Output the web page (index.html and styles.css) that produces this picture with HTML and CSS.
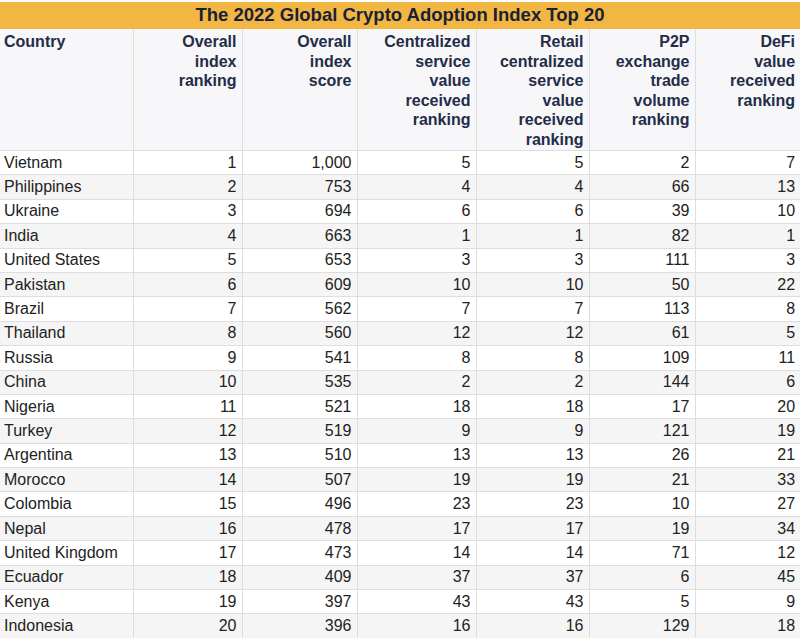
FILE: index.html
```html
<!DOCTYPE html>
<html>
<head>
<meta charset="utf-8">
<link rel="stylesheet" href="styles.css">
</head>
<body>
<div class="top-strip"></div>
<table class="tbl">
<colgroup>
<col class="c1"><col class="c2"><col class="c3"><col class="c4"><col class="c5"><col class="c6"><col class="c7">
</colgroup>
<thead>
<tr class="title-row"><th colspan="7" class="title">The 2022 Global Crypto Adoption Index Top 20</th></tr>
<tr class="head-row">
<th class="left">Country</th>
<th>Overall<br>index<br>ranking</th>
<th>Overall<br>index<br>score</th>
<th>Centralized<br>service<br>value<br>received<br>ranking</th>
<th>Retail<br>centralized<br>service<br>value<br>received<br>ranking</th>
<th>P2P<br>exchange<br>trade<br>volume<br>ranking</th>
<th>DeFi<br>value<br>received<br>ranking</th>
</tr>
</thead>
<tbody>
<tr><td class="left">Vietnam</td><td>1</td><td>1,000</td><td>5</td><td>5</td><td>2</td><td>7</td></tr>
<tr><td class="left">Philippines</td><td>2</td><td>753</td><td>4</td><td>4</td><td>66</td><td>13</td></tr>
<tr><td class="left">Ukraine</td><td>3</td><td>694</td><td>6</td><td>6</td><td>39</td><td>10</td></tr>
<tr><td class="left">India</td><td>4</td><td>663</td><td>1</td><td>1</td><td>82</td><td>1</td></tr>
<tr><td class="left">United States</td><td>5</td><td>653</td><td>3</td><td>3</td><td>111</td><td>3</td></tr>
<tr><td class="left">Pakistan</td><td>6</td><td>609</td><td>10</td><td>10</td><td>50</td><td>22</td></tr>
<tr><td class="left">Brazil</td><td>7</td><td>562</td><td>7</td><td>7</td><td>113</td><td>8</td></tr>
<tr><td class="left">Thailand</td><td>8</td><td>560</td><td>12</td><td>12</td><td>61</td><td>5</td></tr>
<tr><td class="left">Russia</td><td>9</td><td>541</td><td>8</td><td>8</td><td>109</td><td>11</td></tr>
<tr><td class="left">China</td><td>10</td><td>535</td><td>2</td><td>2</td><td>144</td><td>6</td></tr>
<tr><td class="left">Nigeria</td><td>11</td><td>521</td><td>18</td><td>18</td><td>17</td><td>20</td></tr>
<tr><td class="left">Turkey</td><td>12</td><td>519</td><td>9</td><td>9</td><td>121</td><td>19</td></tr>
<tr><td class="left">Argentina</td><td>13</td><td>510</td><td>13</td><td>13</td><td>26</td><td>21</td></tr>
<tr><td class="left">Morocco</td><td>14</td><td>507</td><td>19</td><td>19</td><td>21</td><td>33</td></tr>
<tr><td class="left">Colombia</td><td>15</td><td>496</td><td>23</td><td>23</td><td>10</td><td>27</td></tr>
<tr><td class="left">Nepal</td><td>16</td><td>478</td><td>17</td><td>17</td><td>19</td><td>34</td></tr>
<tr><td class="left">United Kingdom</td><td>17</td><td>473</td><td>14</td><td>14</td><td>71</td><td>12</td></tr>
<tr><td class="left">Ecuador</td><td>18</td><td>409</td><td>37</td><td>37</td><td>6</td><td>45</td></tr>
<tr><td class="left">Kenya</td><td>19</td><td>397</td><td>43</td><td>43</td><td>5</td><td>9</td></tr>
<tr><td class="left">Indonesia</td><td>20</td><td>396</td><td>16</td><td>16</td><td>129</td><td>18</td></tr>
</tbody>
</table>
</body>
</html>
```
FILE: styles.css
```css
html, body {
  margin: 0;
  padding: 0;
  background: #ffffff;
}
body {
  width: 800px;
  height: 638px;
  overflow: hidden;
  font-family: "Liberation Sans", Arial, sans-serif;
}
.top-strip {
  height: 2px;
  background: #ffffff;
}
.tbl {
  width: 800px;
  border-collapse: collapse;
  table-layout: fixed;
}
.c1 { width: 133px; }
.c2 { width: 109px; }
.c3 { width: 115px; }
.c4 { width: 119px; }
.c5 { width: 113px; }
.c6 { width: 106px; }
.c7 { width: 105px; }
.tbl th, .tbl td {
  border: 1px solid #dedede;
  padding: 0 5px 0 4px;
  text-align: right;
  overflow: hidden;
  white-space: nowrap;
}
.tbl tr > :first-child { border-left: none; }
.tbl tr > :last-child { border-right: none; }
.title-row th {
  background: #f1b742;
  color: #1a2136;
  font-size: 18.5px;
  font-weight: bold;
  text-align: center;
  height: 26px;
  padding: 0;
  border-top: none;
  border-color: #f1b742;
}
.head-row th {
  background: #f7f7f9;
  color: #232c48;
  font-size: 16px;
  font-weight: bold;
  line-height: 19.5px;
  vertical-align: top;
  height: 118px;
  padding-top: 3px;
}
.tbl td {
  color: #222222;
  font-size: 16px;
  height: 23.4px;
  line-height: 18px;
  vertical-align: middle;
}
.tbl tbody tr:nth-child(even) td { background: #f5f5f5; }
.tbl .left { text-align: left; }
```
